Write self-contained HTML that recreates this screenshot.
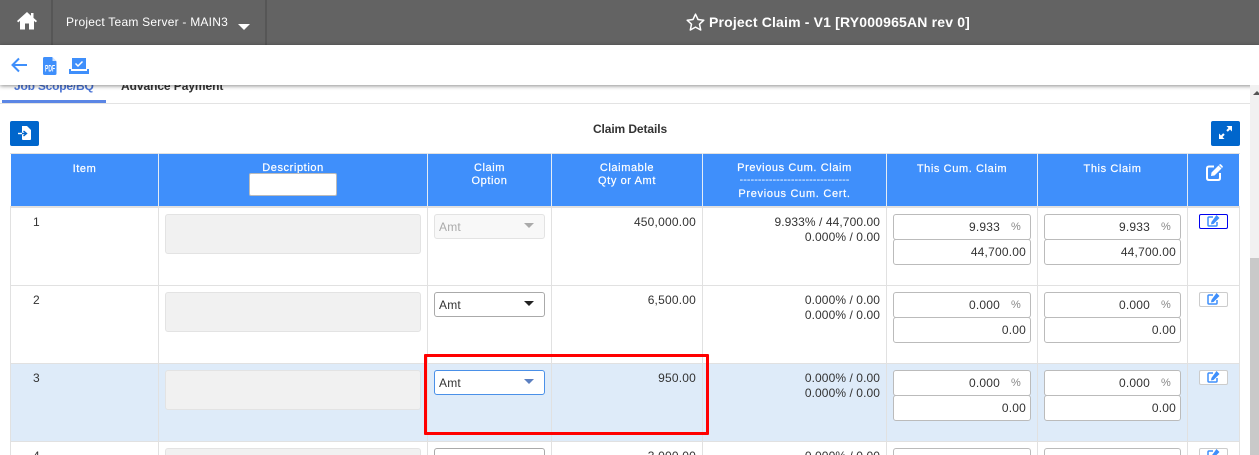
<!DOCTYPE html>
<html><head><meta charset="utf-8">
<style>
html,body{margin:0;padding:0;width:1259px;height:455px;overflow:hidden;background:#fff}
body{position:relative;font-family:"Liberation Sans",sans-serif;font-size:12px;color:#333;letter-spacing:.2px}
div,span,svg{position:absolute;box-sizing:border-box}
.t{white-space:nowrap;line-height:14px}
.r{text-align:right}
.c{text-align:center}
.p{letter-spacing:.08px}
.h{color:#fff;font-size:11px;letter-spacing:.6px;line-height:13px;text-align:center;white-space:nowrap;-webkit-text-stroke:.2px #fff}
.vl{width:1px;background:#e1e1e1}
.hv{width:1px;background:#e4ecf5;top:153px;height:53px}
.hl{height:1px;left:10px;width:1230px;background:#e1e1e1}
.in{background:#fff;border:1px solid #bbb;border-radius:3px;height:26px}
.desc{left:165px;width:256px;height:40px;background:#f1f1f1;border:1px solid #e3e3e3;border-radius:3px}
.sel{left:434px;width:111px;height:25px;background:#fff;border:1px solid #aaa;border-radius:3px;line-height:25px;padding-left:4px;color:#333}
.ar{width:0;height:0;border-left:5px solid transparent;border-right:5px solid transparent;border-top:5px solid #222}
.ed{left:1199px;width:29px;height:15px;background:#fff;border:1px solid #ccc;border-radius:2px}
.pc{color:#888;font-size:11px}
.cut{height:6px;overflow:hidden}
.low{height:7px;border-bottom:0;border-bottom-left-radius:0;border-bottom-right-radius:0}
</style></head><body>
<div style="left:0;top:0;width:1259px;height:455px;overflow:hidden">

<!-- top bar -->
<div style="left:0;top:0;width:1259px;height:45px;background:#636363"></div>
<div style="left:51px;top:0;width:2px;height:45px;background:#565656"></div>
<div style="left:265px;top:0;width:2px;height:45px;background:#565656"></div>
<svg style="left:17px;top:12px" width="20" height="18" viewBox="0 0 20 18"><path d="M10 0 L0 9 L1.2 10.4 L3 8.9 V17.5 H8 V11.5 H12 V17.5 H17 V8.9 L18.8 10.4 L20 9 L16.5 5.9 V1 H14 V3.7 Z" fill="#fff"/></svg>
<div class="t" style="left:66px;top:15px;color:#fff;font-size:12px;letter-spacing:.23px">Project Team Server - MAIN3</div>
<div class="ar" style="left:238px;top:24px;border-left-width:6px;border-right-width:6px;border-top:6px solid #fff"></div>
<svg style="left:686px;top:13px" width="19" height="18" viewBox="0 0 19 18"><path d="M9.5 1.2 L12 6.5 L17.8 7.2 L13.5 11.2 L14.7 17 L9.5 14.1 L4.3 17 L5.5 11.2 L1.2 7.2 L7 6.5 Z" fill="none" stroke="#fff" stroke-width="1.5" stroke-linejoin="round"/></svg>
<div class="t" style="left:709px;top:15px;color:#fff;font-size:14px;font-weight:bold;letter-spacing:.17px">Project Claim - V1 [RY000965AN rev 0]</div>

<!-- tabs (clipped under toolbar) -->
<div class="t" style="left:14px;top:79px;color:#4a74d6;font-weight:bold;font-size:12px;letter-spacing:-.2px">Job Scope/BQ</div>
<div class="t" style="left:121px;top:79px;color:#333;font-weight:bold;font-size:12px;letter-spacing:-.07px">Advance Payment</div>
<div style="left:2px;top:100px;width:104px;height:3px;background:#5b86e5"></div>
<div style="left:0;top:103px;width:1250px;height:1px;background:#e3e3e3"></div>

<!-- toolbar -->
<div style="left:0;top:45px;width:1259px;height:40px;background:#fff;box-shadow:0 1px 4px rgba(0,0,0,.45)"></div>
<svg style="left:11px;top:57px" width="17" height="16" viewBox="0 0 17 16"><path d="M16 8 H2 M8 1.5 L1.5 8 L8 14.5" fill="none" stroke="#3f8ffb" stroke-width="2"/></svg>
<svg style="left:43px;top:57px" width="14" height="18" viewBox="0 0 14 18"><path d="M1.5 0 H9 L13.5 4.5 V16.5 Q13.5 18 12 18 H1.5 Q0 18 0 16.5 V1.5 Q0 0 1.5 0Z" fill="#3f8ffb"/><path d="M9.5 0 V4 H13.5" fill="#cfe2fd"/><text x="2" y="14.5" font-family="Liberation Sans" font-size="9" font-weight="bold" fill="#fff" letter-spacing="0" textLength="10" lengthAdjust="spacingAndGlyphs">PDF</text></svg>
<svg style="left:69px;top:58px" width="20" height="16" viewBox="0 0 20 16"><path d="M3 0 H17 V11 H3Z" fill="#3f8ffb"/><path d="M0 11 H2 V13 H18 V11 H20 V16 H0Z" fill="#3f8ffb"/><path d="M6.5 5.5 L9 8 L13.5 3.5" fill="none" stroke="#fff" stroke-width="1.5"/></svg>

<!-- section header -->
<div style="left:10px;top:121px;width:29px;height:25px;background:#0066cc;border-radius:2px"></div>
<svg style="left:18px;top:126px" width="14" height="14" viewBox="0 0 14 14"><path d="M4 0 H9 L13 4 V13 Q13 14 12 14 H5 Q4 14 4 13Z" fill="#fff"/><path d="M0 7.5 H8 M5.5 5 L8.5 7.5 L5.5 10" fill="none" stroke="#0066cc" stroke-width="1.4"/><path d="M0 7.5 H4" stroke="#fff" stroke-width="1.4"/></svg>
<div class="t c" style="left:560px;top:122px;width:140px;font-weight:bold;font-size:12px;letter-spacing:-.1px">Claim Details</div>
<div style="left:1211px;top:121px;width:29px;height:25px;background:#0066cc;border-radius:2px"></div>
<svg style="left:1219px;top:126px" width="13" height="13" viewBox="0 0 13 13"><path d="M7.5 0 H13 V5.5 L11 3.5 L8.8 5.7 L7.3 4.2 L9.5 2Z M5.5 13 H0 V7.5 L2 9.5 L4.2 7.3 L5.7 8.8 L3.5 11Z" fill="#fff"/></svg>

<!-- header -->
<div style="left:11px;top:153px;width:1228px;height:53px;background:#3f8ffb"></div>
<div style="left:10px;top:153px;width:1230px;height:1px;background:#e1e1e1"></div>
<div class="hv" style="left:158px"></div>
<div class="hv" style="left:427px"></div>
<div class="hv" style="left:551px"></div>
<div class="hv" style="left:702px"></div>
<div class="hv" style="left:886px"></div>
<div class="hv" style="left:1037px"></div>
<div class="hv" style="left:1187px"></div>
<div class="h" style="left:11px;top:163px;width:147px">Item</div>
<div class="h" style="left:159px;top:162px;width:268px">Description</div>
<div style="left:249px;top:173px;width:88px;height:23px;background:#fff;border:1px solid #bbb;border-radius:2px"></div>
<div class="h" style="left:428px;top:162px;width:123px">Claim<br>Option</div>
<div class="h" style="left:552px;top:162px;width:150px">Claimable<br>Qty or Amt</div>
<div class="h" style="left:703px;top:162px;width:183px">Previous Cum. Claim</div>
<div class="h" style="left:703px;top:174px;width:183px;letter-spacing:0;-webkit-text-stroke:0">------------------------------</div>
<div class="h" style="left:703px;top:188px;width:183px;letter-spacing:.7px">Previous Cum. Cert.</div>
<div class="h" style="left:887px;top:163px;width:150px">This Cum. Claim</div>
<div class="h" style="left:1038px;top:163px;width:149px">This Claim</div>
<svg style="left:1206px;top:164px" width="17" height="17" viewBox="0 0 17 17"><path d="M12.5 1.5 L15.5 4.5 L8.5 11.5 L5 12 L5.5 8.5Z M13.5 .5 Q14.3 -.2 15 .5 L16.5 2 Q17.2 2.7 16.5 3.5 L16 4 L13 1Z" fill="#fff"/><path d="M8 2.5 H3 Q1 2.5 1 4.5 V14 Q1 16 3 16 H12 Q14 16 14 14 V9" fill="none" stroke="#fff" stroke-width="2"/></svg>
<div style="left:10px;top:206px;width:1230px;height:2px;background:#e1e1e1"></div>

<!-- row 3 highlight -->
<div style="left:11px;top:364px;width:1228px;height:77px;background:#deebf9"></div>

<!-- grid -->
<div class="vl" style="left:10px;top:208px;height:247px"></div>
<div class="vl" style="left:158px;top:208px;height:247px"></div>
<div class="vl" style="left:427px;top:208px;height:247px"></div>
<div class="vl" style="left:551px;top:208px;height:247px"></div>
<div class="vl" style="left:702px;top:208px;height:247px"></div>
<div class="vl" style="left:886px;top:208px;height:247px"></div>
<div class="vl" style="left:1037px;top:208px;height:247px"></div>
<div class="vl" style="left:1187px;top:208px;height:247px"></div>
<div class="vl" style="left:1239px;top:208px;height:247px"></div>
<div class="hl" style="top:285px"></div>
<div class="hl" style="top:363px"></div>
<div class="hl" style="top:441px"></div>

<!-- row 1 -->
<div class="t" style="left:33px;top:215px">1</div>
<div class="desc" style="top:214px"></div>
<div class="sel" style="top:214px;background:#f8f8f8;border-color:#e3e3e3;color:#aaa">Amt</div>
<div class="ar" style="left:524px;top:223px;border-top-color:#aaa"></div>
<div class="t r" style="left:560px;top:215px;width:136px">450,000.00</div>
<div class="t r p" style="left:710px;top:215px;width:170px">9.933% / 44,700.00</div>
<div class="t r p" style="left:710px;top:230px;width:170px">0.000% / 0.00</div>
<div class="in" style="left:893px;top:214px;width:138px"></div>
<div class="t r" style="left:900px;top:220px;width:100px">9.933</div><div class="t pc" style="left:1011px;top:220px">%</div>
<div class="in" style="left:893px;top:239px;width:138px"></div>
<div class="t r" style="left:900px;top:245px;width:126px">44,700.00</div>
<div class="in" style="left:1044px;top:214px;width:137px"></div>
<div class="t r" style="left:1050px;top:220px;width:100px">9.933</div><div class="t pc" style="left:1161px;top:220px">%</div>
<div class="in" style="left:1044px;top:239px;width:137px"></div>
<div class="t r" style="left:1050px;top:245px;width:126px">44,700.00</div>
<div class="ed" style="top:214px;border-color:#00e;"></div>
<svg style="left:1207px;top:215px" width="13" height="12" viewBox="0 0 13 12"><path d="M9.5 0 L12.5 3 L6.5 9 L4 9.4 L4.4 7Z" fill="#3f8ffb"/><path d="M6 2 H2 Q1 2 1 3 V10 Q1 11 2 11 H9 Q10 11 10 10 V7" fill="none" stroke="#3f8ffb" stroke-width="1.5"/></svg>

<!-- row 2 -->
<div class="t" style="left:33px;top:293px">2</div>
<div class="desc" style="top:292px"></div>
<div class="sel" style="top:292px">Amt</div>
<div class="ar" style="left:524px;top:301px"></div>
<div class="t r" style="left:560px;top:293px;width:136px">6,500.00</div>
<div class="t r p" style="left:710px;top:293px;width:170px">0.000% / 0.00</div>
<div class="t r p" style="left:710px;top:308px;width:170px">0.000% / 0.00</div>
<div class="in" style="left:893px;top:292px;width:138px"></div>
<div class="t r" style="left:900px;top:298px;width:100px">0.000</div><div class="t pc" style="left:1011px;top:298px">%</div>
<div class="in" style="left:893px;top:317px;width:138px"></div>
<div class="t r" style="left:900px;top:323px;width:126px">0.00</div>
<div class="in" style="left:1044px;top:292px;width:137px"></div>
<div class="t r" style="left:1050px;top:298px;width:100px">0.000</div><div class="t pc" style="left:1161px;top:298px">%</div>
<div class="in" style="left:1044px;top:317px;width:137px"></div>
<div class="t r" style="left:1050px;top:323px;width:126px">0.00</div>
<div class="ed" style="top:292px"></div>
<svg style="left:1207px;top:293px" width="13" height="12" viewBox="0 0 13 12"><path d="M9.5 0 L12.5 3 L6.5 9 L4 9.4 L4.4 7Z" fill="#3f8ffb"/><path d="M6 2 H2 Q1 2 1 3 V10 Q1 11 2 11 H9 Q10 11 10 10 V7" fill="none" stroke="#3f8ffb" stroke-width="1.5"/></svg>

<!-- row 3 -->
<div class="t" style="left:33px;top:371px">3</div>
<div class="desc" style="top:370px"></div>
<div class="sel" style="top:370px;border-color:#4a90e8">Amt</div>
<div class="ar" style="left:524px;top:379px;border-top-color:#5b7fc0"></div>
<div class="t r" style="left:560px;top:371px;width:136px">950.00</div>
<div class="t r p" style="left:710px;top:371px;width:170px">0.000% / 0.00</div>
<div class="t r p" style="left:710px;top:386px;width:170px">0.000% / 0.00</div>
<div class="in" style="left:893px;top:370px;width:138px"></div>
<div class="t r" style="left:900px;top:376px;width:100px">0.000</div><div class="t pc" style="left:1011px;top:376px">%</div>
<div class="in" style="left:893px;top:395px;width:138px"></div>
<div class="t r" style="left:900px;top:401px;width:126px">0.00</div>
<div class="in" style="left:1044px;top:370px;width:137px"></div>
<div class="t r" style="left:1050px;top:376px;width:100px">0.000</div><div class="t pc" style="left:1161px;top:376px">%</div>
<div class="in" style="left:1044px;top:395px;width:137px"></div>
<div class="t r" style="left:1050px;top:401px;width:126px">0.00</div>
<div class="ed" style="top:370px"></div>
<svg style="left:1207px;top:371px" width="13" height="12" viewBox="0 0 13 12"><path d="M9.5 0 L12.5 3 L6.5 9 L4 9.4 L4.4 7Z" fill="#3f8ffb"/><path d="M6 2 H2 Q1 2 1 3 V10 Q1 11 2 11 H9 Q10 11 10 10 V7" fill="none" stroke="#3f8ffb" stroke-width="1.5"/></svg>

<!-- row 4 (cut by the frame) -->
<div class="t cut" style="left:33px;top:449px">4</div>
<div class="desc low" style="top:448px"></div>
<div class="sel low" style="top:448px"></div>
<div class="t r cut" style="left:560px;top:449px;width:136px">3,000.00</div>
<div class="t r p cut" style="left:710px;top:449px;width:170px">0.000% / 0.00</div>
<div class="in low" style="left:893px;top:448px;width:138px"></div>
<div class="in low" style="left:1044px;top:448px;width:137px"></div>
<div class="ed low" style="top:448px"></div>
<svg style="left:1207px;top:449px" width="13" height="6" viewBox="0 0 13 6"><path d="M9.5 0 L12.5 3 L9.5 6 H5.5 L4.4 7Z" fill="#3f8ffb"/><path d="M6 2 H2 Q1 2 1 3 V6" fill="none" stroke="#3f8ffb" stroke-width="1.5"/></svg>

<!-- red annotation -->
<div style="left:424px;top:354px;width:285px;height:81px;border:3px solid #f00;border-radius:1px"></div>

<!-- scrollbar -->
<div style="left:1250px;top:85px;width:9px;height:370px;background:#f1f1f1"></div>
<div style="left:1250px;top:258px;width:9px;height:197px;background:#c9c9c9"></div>
<svg style="left:1253px;top:90px" width="6" height="6" viewBox="0 0 6 6"><path d="M0 5 L4 1 L6 3 V5" fill="#555"/></svg>

</div>
</body></html>
